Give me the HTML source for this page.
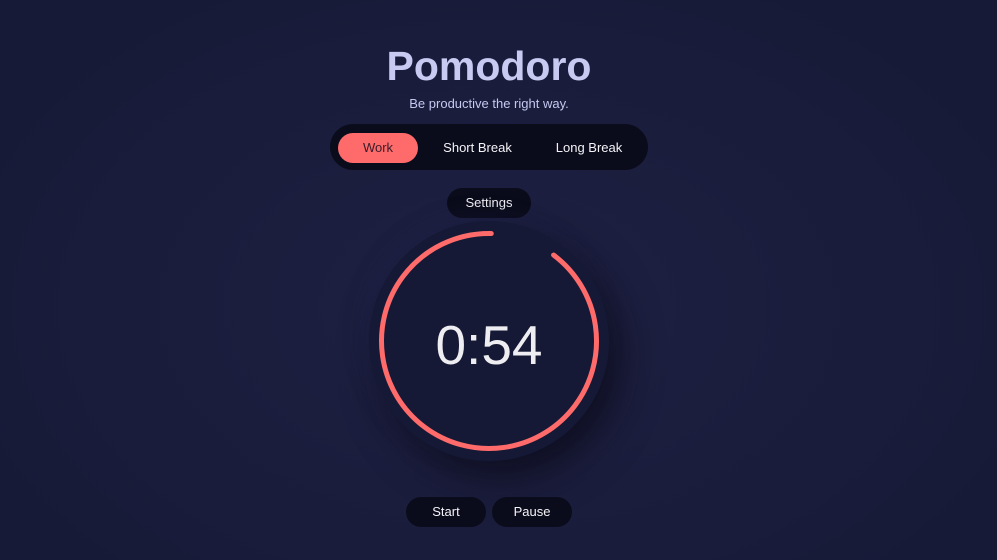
<!DOCTYPE html>
<html><head><meta charset="utf-8"><style>
*{margin:0;padding:0;box-sizing:border-box}
html,body{width:997px;height:560px;overflow:hidden}
body{background:radial-gradient(ellipse 60% 70% at 50% 55%,#1f2144 0%,#1b1d3d 50%,#161a36 100%);font-family:"Liberation Sans",sans-serif;position:relative;color:#fff}
.abs{position:absolute}
h1{position:absolute;left:0;width:978px;top:43px;text-align:center;font-size:41px;line-height:46px;font-weight:bold;color:#c9caf2;font-family:"Liberation Sans",sans-serif}
.sub{top:96px;left:0;width:978px;text-align:center;font-size:13px;color:#c5c8f0}
.bar{left:330px;top:124px;width:318px;height:46px;border-radius:23px;background:#0b0c1b}
.pill{height:30px;border-radius:15px;font-size:13px;line-height:30px;text-align:center;color:#f3f3f8}
.btn{background:#0b0c1b}
</style></head><body>
<h1>Pomodoro</h1>
<div class="abs sub">Be productive the right way.</div>
<div class="abs bar"></div>
<div class="abs pill" style="left:338px;top:133px;width:80px;background:#fe6b6a;color:#3a1b2a">Work</div>
<div class="abs pill" style="left:430px;top:133px;width:95px">Short Break</div>
<div class="abs pill" style="left:543px;top:133px;width:92px">Long Break</div>
<div class="abs pill btn" style="left:447px;top:188px;width:84px">Settings</div>
<div class="abs" style="left:369px;top:221px;width:240px;height:240px;border-radius:50%;background:#161935;box-shadow:12px 16px 40px rgba(8,9,20,0.7),-6px -6px 20px rgba(40,44,90,0.25)"></div>
<svg class="abs" style="left:369px;top:221px" width="240" height="240">
<circle cx="120" cy="120" r="107.5" fill="none" stroke="#fe6b6a" stroke-width="5" stroke-linecap="round" stroke-dasharray="608 67" transform="rotate(-53 120 120)"/>
</svg>
<div class="abs" style="left:369px;top:313px;width:240px;text-align:center;font-size:55px;color:#eeeef2;line-height:64px">0:54</div>
<div class="abs pill btn" style="left:406px;top:497px;width:80px">Start</div>
<div class="abs pill btn" style="left:492px;top:497px;width:80px">Pause</div>
</body></html>
